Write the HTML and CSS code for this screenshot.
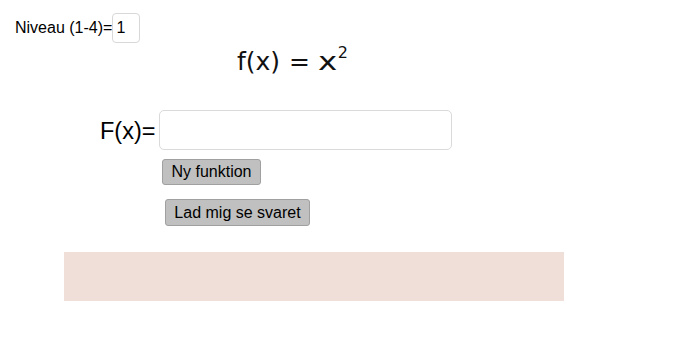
FILE: index.html
```html
<!DOCTYPE html>
<html lang="da">
<head>
<meta charset="utf-8">
<title>Stamfunktion</title>
<link rel="stylesheet" href="styles.css">
</head>
<body>
<div class="level">
  <span class="level-label">Niveau (1-4)=</span>
  <span class="level-input">1</span>
</div>
<div class="formula"><span class="fx">f(x)</span><span class="eq">=</span><span class="xx">x</span><span class="sq">2</span></div>
<div class="answer">
  <span class="answer-label">F(x)=</span>
  <span class="answer-input"></span>
</div>
<button class="btn btn-new">Ny funktion</button>
<button class="btn btn-show">Lad mig se svaret</button>
<div class="result"></div>
</body>
</html>
```
FILE: styles.css
```css
html, body {
  margin: 0;
  padding: 0;
  background: #ffffff;
  width: 700px;
  height: 350px;
  overflow: hidden;
  font-family: "Liberation Sans", Arial, sans-serif;
  color: #000;
}
.level {
  display: flex;
  align-items: center;
  margin: 13px 0 0 15px;
  height: 30px;
}
.level-label {
  font-size: 16px;
}
.level-input {
  box-sizing: border-box;
  width: 28px;
  height: 30px;
  border: 1px solid #d8d8d8;
  border-radius: 4px;
  font-size: 16px;
  line-height: 28px;
  padding-left: 3px;
  margin-left: 0;
}
.formula {
  margin: 3px 0 0 237px;
  height: 31px;
  line-height: 31px;
  font-family: "DejaVu Sans", sans-serif;
  font-weight: 400;
  font-size: 25px;
  color: #111;
  white-space: nowrap;
}
.formula .eq {
  margin: 0 8px 0 9px;
}
.formula .xx {
  display: inline-block;
  transform: scaleX(1.3);
  transform-origin: left center;
  margin-right: 5px;
}
.formula .sq {
  font-size: 16px;
  position: relative;
  top: -12px;
}
.answer {
  display: flex;
  align-items: center;
  gap: 4px;
  margin: 33px 0 0 100px;
  height: 40px;
}
.answer-label {
  font-size: 23.5px;
  position: relative;
  top: 1px;
}
.answer-input {
  box-sizing: border-box;
  width: 293px;
  height: 40px;
  border: 1px solid #dadada;
  border-radius: 5px;
}
.btn {
  display: block;
  box-sizing: border-box;
  background: #c0c0c0;
  border: 1px solid #a0a0a0;
  border-radius: 3px;
  font-family: "Liberation Sans", Arial, sans-serif;
  font-size: 16px;
  color: #000;
  padding: 0;
  text-align: center;
  white-space: nowrap;
}
.btn-new {
  margin: 9px 0 0 162px;
  height: 26px;
  width: 99px;
}
.btn-show {
  margin: 14px 0 0 165px;
  height: 27px;
  width: 145px;
}
.result {
  margin: 26px 0 0 64px;
  width: 500px;
  height: 49px;
  background: #f0dfd8;
}
```
